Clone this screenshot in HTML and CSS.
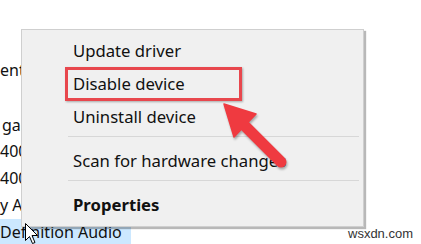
FILE: index.html
```html
<!DOCTYPE html>
<html>
<head>
<meta charset="utf-8">
<link rel="stylesheet" href="styles.css">
</head>
<body>
<div class="stage">
  <div class="tree">
    <div class="row">ent Device</div>
    <div class="row"></div>
    <div class="row indent">gaming</div>
    <div class="row">4000 Series</div>
    <div class="row">4000 Series</div>
    <div class="row">y Audio</div>
    <div class="row selected"><span class="sel">Definition Audio</span></div>
  </div>

  <div class="menu">
    <div class="item">Update driver</div>
    <div class="item marked">Disable device</div>
    <div class="item">Uninstall device</div>
    <div class="sep"></div>
    <div class="item">Scan for hardware changes</div>
    <div class="sep"></div>
    <div class="item bold">Properties</div>
  </div>

  <svg class="arrow" width="421" height="244" viewBox="0 0 421 244">
    <line x1="243" y1="124" x2="281" y2="162" stroke="#ef3a40" stroke-width="11" stroke-linecap="round"/>
    <polygon points="224,104 256,114 234,137" fill="#ef3a40" stroke="#ef3a40" stroke-width="1.5" stroke-linejoin="round"/>
  </svg>

  <svg class="cursor" width="16" height="24" viewBox="0 0 16 24">
    <path d="M0.5 0.5 L0.5 17.5 L4.5 13.5 L7.5 20.5 L10 19.5 L7 12.5 L12.5 12.5 Z" fill="#fff" stroke="#000" stroke-width="1" stroke-linejoin="miter"/>
  </svg>

  <div class="watermark">wsxdn.com</div>
</div>
</body>
</html>
```

FILE: styles.css
```css
html, body {
  margin: 0;
  padding: 0;
  background: #ffffff;
}

.stage {
  position: relative;
  width: 421px;
  height: 244px;
  overflow: hidden;
  font-family: "Noto Sans", "Open Sans", sans-serif;
  color: #111;
}

.tree {
  display: flex;
  flex-direction: column;
  padding-top: 57px;
  font-size: 16px;
}

.row {
  height: 27px;
  line-height: 27px;
  white-space: nowrap;
}

.row.indent {
  padding-left: 2px;
  line-height: 29px;
}

.row.selected {
  line-height: 27px;
}

.sel {
  display: inline-block;
  background: #cce8ff;
  padding-right: 9px;
}

.menu {
  position: absolute;
  left: 21px;
  top: 29px;
  width: 341px;
  padding: 5px 0 4px 0;
  background: #f0f0f0;
  border: 1px solid #cfcfcf;
  box-shadow: 2px 2px 1px rgba(0, 0, 0, 0.28);
  font-size: 16.7px;
  display: flex;
  flex-direction: column;
}

.item {
  position: relative;
  height: 33px;
  line-height: 32px;
  padding-left: 51px;
  white-space: nowrap;
}

.item.bold {
  font-weight: 700;
}

.item.marked::after {
  content: "";
  position: absolute;
  left: 43px;
  top: -1px;
  width: 171px;
  height: 28px;
  border: 3px solid #e8474d;
  box-shadow: 1px 1px 2px rgba(0, 0, 0, 0.3);
}

.sep {
  height: 1px;
  margin: 2px 4px 8px 46px;
  background: #d7d7d7;
}

.arrow {
  position: absolute;
  left: 0;
  top: 0;
  filter: drop-shadow(1px 2px 1px rgba(0, 0, 0, 0.3));
}

.cursor {
  position: absolute;
  left: 25px;
  top: 223px;
}

.watermark {
  position: absolute;
  left: 348px;
  top: 226px;
  font-family: "Liberation Sans", Arial, sans-serif;
  font-size: 13px;
  color: #333;
}
```
